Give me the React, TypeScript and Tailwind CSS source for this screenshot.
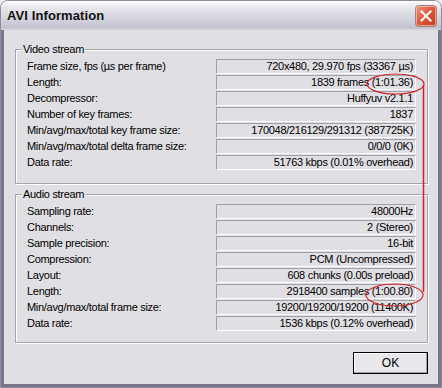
import React from "react";

const video: [string, string][] = [
  ["Frame size, fps (µs per frame)", "720x480, 29.970 fps (33367 µs)"],
  ["Length:", "1839 frames (1:01.36)"],
  ["Decompressor:", "Huffyuv v2.1.1"],
  ["Number of key frames:", "1837"],
  ["Min/avg/max/total key frame size:", "170048/216129/291312 (387725K)"],
  ["Min/avg/max/total delta frame size:", "0/0/0 (0K)"],
  ["Data rate:", "51763 kbps (0.01% overhead)"],
];

const audio: [string, string][] = [
  ["Sampling rate:", "48000Hz"],
  ["Channels:", "2 (Stereo)"],
  ["Sample precision:", "16-bit"],
  ["Compression:", "PCM (Uncompressed)"],
  ["Layout:", "608 chunks (0.00s preload)"],
  ["Length:", "2918400 samples (1:00.80)"],
  ["Min/avg/max/total frame size:", "19200/19200/19200 (11400K)"],
  ["Data rate:", "1536 kbps (0.12% overhead)"],
];

function Row({ label, value }: { label: string; value: string }) {
  return (
    <div className="flex items-center h-[15px]">
      <div className="w-[189px] leading-[15px] whitespace-nowrap">{label}</div>
      <div className="w-[200px] h-[15px] border border-t-[#a0a0a5] border-l-[#a0a0a5] border-r-white border-b-white bg-[#e0dfe3] text-right pr-[2px] leading-[13px] whitespace-nowrap overflow-hidden">
        {value}
      </div>
    </div>
  );
}

function Group({
  title,
  rows,
  className,
}: {
  title: string;
  rows: [string, string][];
  className: string;
}) {
  return (
    <div
      className={
        "relative border border-[#a5a5aa] shadow-[inset_1px_1px_0_#ffffff,1px_1px_0_#ffffff] pl-[11px] pr-[11px] flex flex-col gap-[1px] " +
        className
      }
    >
      <div className="absolute left-[6px] -top-[8px] px-[1px] bg-[#e0dfe3] leading-[15px]">
        {title}
      </div>
      {rows.map(([l, v], i) => (
        <Row key={i} label={l} value={v} />
      ))}
    </div>
  );
}

export default function App() {
  return (
    <div
      className="w-[442px] h-[388px] bg-[#ecebef] text-[11px] tracking-[-0.3px] text-black"
      style={{ fontFamily: '"Liberation Sans", Arial, sans-serif' }}
    >
      <div className="relative w-full h-full flex flex-col rounded-t-[8px] overflow-hidden border border-[#8d8c99]">
        <div className="h-[29px] shrink-0 flex items-center justify-between pl-[6px] pr-[4px] bg-[linear-gradient(to_bottom,#fefefe_0%,#eaeaf0_18%,#d9d9e2_50%,#cacad6_80%,#c2c2cf_92%,#d6d6de_100%)]">
          <div className="font-bold text-[13px] text-[#111] tracking-[0.1px] mt-[1px]">AVI Information</div>
          <svg width="22" height="22" viewBox="0 0 22 22" className="shrink-0">
            <defs>
              <linearGradient id="cb" x1="0" y1="0" x2="1" y2="1">
                <stop offset="0" stopColor="#f09a84" />
                <stop offset="0.5" stopColor="#dc5638" />
                <stop offset="1" stopColor="#c03a1e" />
              </linearGradient>
            </defs>
            <rect x="0.5" y="0.5" width="21" height="21" rx="3" fill="url(#cb)" stroke="#a8827e" />
            <rect x="1.5" y="1.5" width="19" height="19" rx="2" fill="none" stroke="#f4c4b8" strokeOpacity="0.7" />
            <path d="M6.5 6.5 L15.5 15.5 M15.5 6.5 L6.5 15.5" stroke="#fff" strokeWidth="2" strokeLinecap="square" />
          </svg>
        </div>
        <div className="flex-1 border-x-[3px] border-b-[3px] border-[#77768a] bg-[#e0dfe3] flex flex-col pt-[19px] pl-[11px] pr-[10px]">
          <Group title="Video stream" rows={video} className="pt-[9px] pb-[13px]" />
          <Group title="Audio stream" rows={audio} className="mt-[10px] pt-[9px] pb-[11px]" />
          <div className="flex justify-end mt-[9px]">
            <div className="w-[75px] h-[22px] border border-black bg-[#e8e7ec] flex items-center justify-center shadow-[inset_-1px_-1px_0_#a0a0a5,inset_1px_1px_0_#ffffff] text-[12px] tracking-normal">
              OK
            </div>
          </div>
        </div>
        <svg className="absolute left-0 top-0 pointer-events-none" width="442" height="388">
          <ellipse cx="394.5" cy="83" rx="28.5" ry="10" fill="none" stroke="#d2232a" strokeWidth="1.2" />
          <ellipse cx="393.5" cy="294" rx="28.5" ry="11" fill="none" stroke="#d2232a" strokeWidth="1.2" />
          <line x1="422.5" y1="84" x2="422.5" y2="291" stroke="#d2232a" strokeWidth="1.5" />
        </svg>
      </div>
    </div>
  );
}
